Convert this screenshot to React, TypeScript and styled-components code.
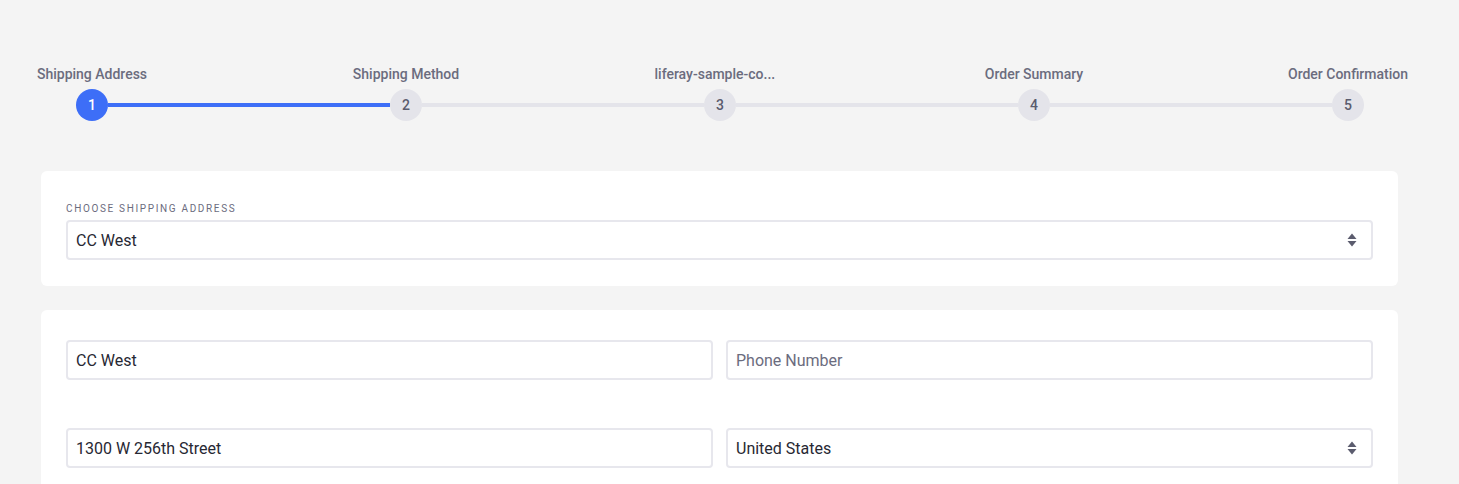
import styled, { createGlobalStyle } from 'styled-components';

const GlobalStyle = createGlobalStyle`
  html, body {
    margin: 0;
    padding: 0;
    background: #f4f4f4;
    font-family: Roboto, "Liberation Sans", sans-serif;
  }
`;

const steps = [
  { label: 'Shipping Address' },
  { label: 'Shipping Method' },
  { label: 'liferay-sample-co...', clipped: true },
  { label: 'Order Summary' },
  { label: 'Order Confirmation' },
];

const activeStep = 0;

function SelectArrows() {
  return (
    <svg width='10' height='14' viewBox='0 0 10 14' aria-hidden='true'>
      <path d='M5 0.5 L9.5 6 H0.5 Z' fill='#5b5c6e' />
      <path d='M5 13.5 L9.5 8 H0.5 Z' fill='#5b5c6e' />
    </svg>
  );
}

export default function App() {
  return (
    <>
      <GlobalStyle />
      <Page>
        <Stepper>
          {steps.map((step, i) => (
            <StepGroup key={step.label} $last={i === steps.length - 1}>
              <Step>
                <StepLabel $clipped={step.clipped}>{step.label}</StepLabel>
                <StepCircle $active={i <= activeStep}>{i + 1}</StepCircle>
              </Step>
              {i < steps.length - 1 && <Connector $done={i === activeStep} />}
            </StepGroup>
          ))}
        </Stepper>

        <Card>
          <FieldLabel>Choose Shipping Address</FieldLabel>
          <SelectWrap>
            <Field readOnly value='CC West' />
            <ArrowSlot>
              <SelectArrows />
            </ArrowSlot>
          </SelectWrap>
        </Card>

        <Card $spaced>
          <FormGrid>
            <Field readOnly value='CC West' />
            <Field readOnly placeholder='Phone Number' />
            <Field readOnly value='1300 W 256th Street' />
            <SelectWrap>
              <Field readOnly value='United States' />
              <ArrowSlot>
                <SelectArrows />
              </ArrowSlot>
            </SelectWrap>
          </FormGrid>
        </Card>
      </Page>
    </>
  );
}

const Page = styled.div`
  padding: 64px 61px 0 41px;
  display: flex;
  flex-direction: column;
`;

const Stepper = styled.div`
  display: flex;
  align-items: flex-end;
  padding: 0 34px 0 35px;
`;

const StepGroup = styled.div<{ $last?: boolean }>`
  display: flex;
  align-items: flex-end;
  flex: ${(p) => (p.$last ? '0 0 auto' : '1 1 0')};
`;

const Step = styled.div`
  width: 32px;
  display: flex;
  flex-direction: column;
  align-items: center;
`;

const StepLabel = styled.div<{ $clipped?: boolean }>`
  font-size: 14px;
  font-weight: 500;
  line-height: 20px;
  color: #6b6c7e;
  white-space: nowrap;
  margin-bottom: 5px;
  ${(p) => (p.$clipped ? 'width: 131px; text-align: left; overflow: hidden;' : '')}
`;

const StepCircle = styled.div<{ $active?: boolean }>`
  width: 32px;
  height: 32px;
  border-radius: 50%;
  display: flex;
  align-items: center;
  justify-content: center;
  font-size: 14px;
  font-weight: 500;
  background: ${(p) => (p.$active ? '#3d6ef7' : '#e4e4ea')};
  color: ${(p) => (p.$active ? '#ffffff' : '#5b5c6e')};
`;

const Connector = styled.div<{ $done?: boolean }>`
  flex: 1;
  height: 4px;
  margin-bottom: 14px;
  background: ${(p) => (p.$done ? '#3d6ef7' : '#e4e4ea')};
`;

const Card = styled.div<{ $spaced?: boolean }>`
  background: #ffffff;
  border-radius: 6px;
  margin-top: ${(p) => (p.$spaced ? '24px' : '50px')};
  padding: ${(p) => (p.$spaced ? '30px 25px 24px' : '32px 25px 26px')};
`;

const FieldLabel = styled.div`
  font-size: 10px;
  line-height: 12px;
  letter-spacing: 1.65px;
  text-transform: uppercase;
  color: #6b6c7e;
  margin-bottom: 5px;
`;

const FormGrid = styled.div`
  display: grid;
  grid-template-columns: 1fr 1fr;
  column-gap: 13px;
  row-gap: 48px;
`;

const SelectWrap = styled.div`
  position: relative;
`;

const ArrowSlot = styled.span`
  position: absolute;
  right: 16px;
  top: 13px;
  display: flex;
  pointer-events: none;
`;

const Field = styled.input`
  box-sizing: border-box;
  width: 100%;
  height: 40px;
  border: 2px solid #e7e7ed;
  border-radius: 4px;
  padding: 0 8px;
  font-family: Roboto, "Liberation Sans", sans-serif;
  font-size: 16px;
  color: #272833;
  background: #ffffff;
  outline: none;
  &::placeholder {
    color: #6b6c7e;
  }
`;
